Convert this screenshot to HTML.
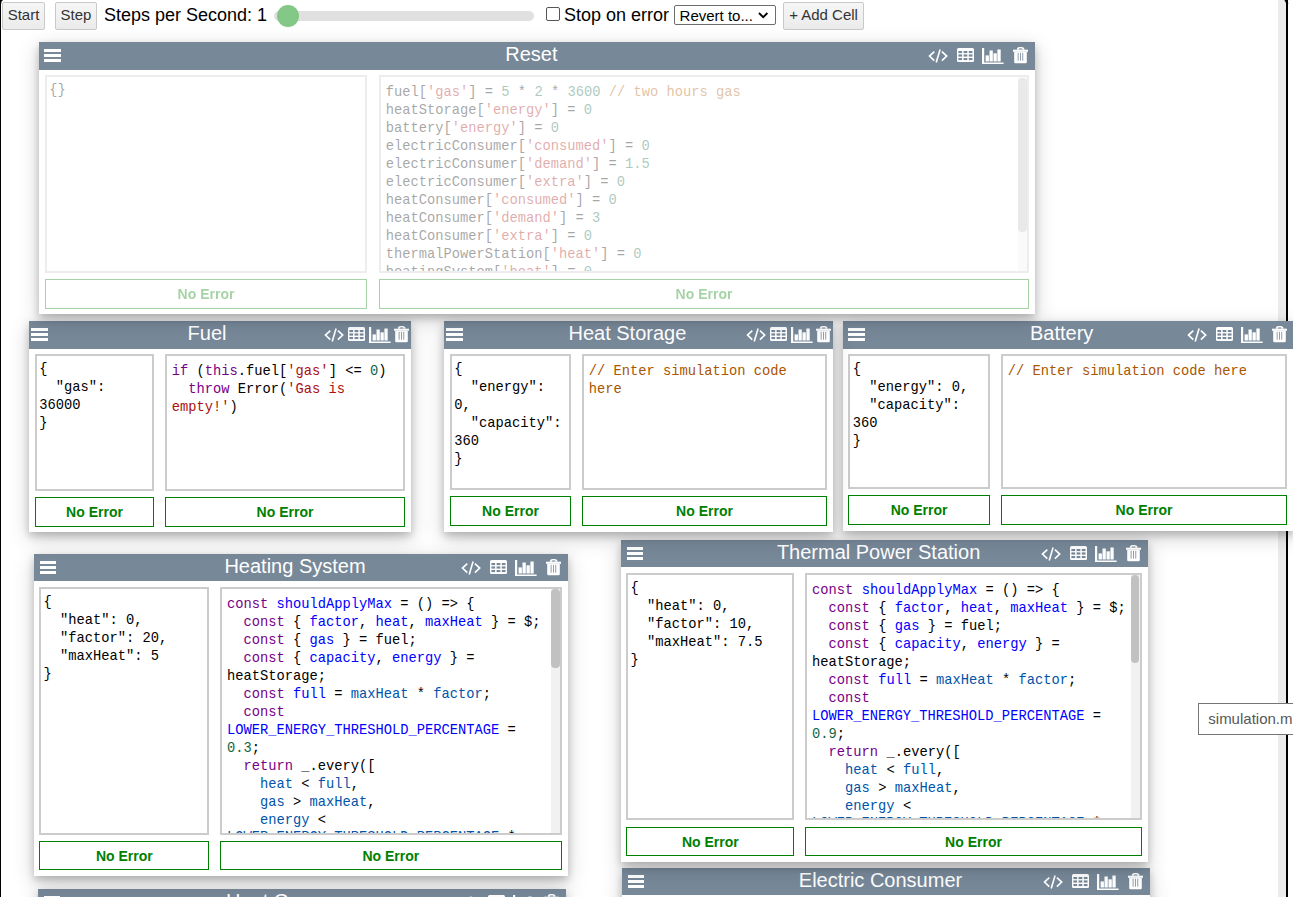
<!DOCTYPE html><html><head><meta charset="utf-8"><style>
html,body{margin:0;padding:0;background:#fff;width:1293px;height:897px;overflow:hidden;position:relative}
*{box-sizing:content-box}
.btn{position:absolute;box-sizing:border-box;border:1px solid #c9c9c9;border-radius:2px;background:linear-gradient(#f6f6f6,#ebebeb);color:#333;font:15px/25px "Liberation Sans",sans-serif;text-align:center}
</style></head><body>
<div style="position:absolute;left:1278px;top:0;width:8px;height:897px;background:#ececec"></div>
<div style="position:absolute;left:1286px;top:0;width:2.3px;height:897px;background:#000"></div>
<div style="position:absolute;left:0;top:0;width:1px;height:897px;background:#000"></div>
<svg style="position:absolute;left:0;top:0" width="4" height="4" viewBox="0 0 4 4"><path d="M0.5 4 Q0.5 0.4 2.6 0" fill="none" stroke="#000" stroke-width="1.2"/></svg>
<svg style="position:absolute;left:1282px;top:0" width="7" height="4" viewBox="0 0 7 4"><path d="M5.15 4 Q5.15 0.5 2.8 0" fill="none" stroke="#000" stroke-width="2.2"/></svg>
<div class="btn" style="left:2px;top:2px;width:43px;height:27.6px;line-height:24px">Start</div>
<div class="btn" style="left:55px;top:2px;width:42px;height:27.6px;line-height:24px">Step</div>
<div style="position:absolute;left:104px;top:3px;font:18px/24px 'Liberation Sans', sans-serif;color:#000;white-space:nowrap">Steps per Second: 1</div>
<div style="position:absolute;left:274px;top:11px;width:260px;height:10px;border-radius:5px;background:#e0e0e0"></div>
<div style="position:absolute;left:277px;top:5px;width:22px;height:22px;border-radius:50%;background:#82c785"></div>
<div style="position:absolute;left:546px;top:7px;width:13.6px;height:13.6px;box-sizing:border-box;border:1px solid #555;border-radius:2px;background:#fff"></div>
<div style="position:absolute;left:564px;top:3px;font:18px/24px 'Liberation Sans', sans-serif;color:#000;white-space:nowrap">Stop on error</div>
<div style="position:absolute;left:674.2px;top:5.3px;width:101.4px;height:20.2px;box-sizing:border-box;border:1px solid #6d6d6d;border-radius:2px;background:#fff;font:15px/19.6px 'Liberation Sans', sans-serif;color:#000;padding-left:4.4px;white-space:nowrap">Revert to...<svg style="position:absolute;left:83px;top:6.2px" width="11" height="7" viewBox="0 0 11 7"><path d="M1 1L5.2 5.2L9.4 1" fill="none" stroke="#000" stroke-width="1.8"/></svg></div>
<div class="btn" style="left:783.4px;top:2.2px;width:80.3px;height:27.6px;line-height:24.6px">+ Add Cell</div>
<div style="position:absolute;left:622px;top:868px;width:528px;height:332px;background:#fff;box-shadow:0 4px 8px 0 rgba(0,0,0,.2),0 6px 20px 0 rgba(0,0,0,.19)"><div style="position:absolute;left:0;top:0;width:528px;height:27px;background:#778899"><div style="position:absolute;left:5.5px;top:7px;width:16.7px;height:13px"><div style="position:absolute;left:0;top:0;width:100%;height:3px;background:#fff"></div><div style="position:absolute;left:0;top:5px;width:100%;height:3px;background:#fff"></div><div style="position:absolute;left:0;top:10px;width:100%;height:3px;background:#fff"></div></div><div style="position:absolute;left:58.5px;width:400px;top:0.9px;text-align:center;color:#fff;font:20px/23px 'Liberation Sans', sans-serif;white-space:nowrap">Electric Consumer</div><svg style="position:absolute;left:421.4000000000001px;top:7px" width="21" height="15" viewBox="0 0 21 15"><path d="M6.3 2.6L1.5 7.1L6.3 11.6M13.9 2.6L18.7 7.1L13.9 11.6" fill="none" stroke="#fff" stroke-width="1.65"/><path d="M12.1 0.5L8.2 13.5" fill="none" stroke="#fff" stroke-width="1.6"/></svg><svg style="position:absolute;left:449.9000000000001px;top:6px" width="17" height="15" viewBox="0 0 17 15"><rect x="0" y="0" width="17" height="14.1" rx="1.5" fill="#fff"/><rect x="1.4" y="3.0" width="3.7" height="2.1" fill="#778899"/><rect x="1.4" y="6.4" width="3.7" height="2.2" fill="#778899"/><rect x="1.4" y="10.0" width="3.7" height="2.1" fill="#778899"/><rect x="6.6" y="3.0" width="3.7" height="2.1" fill="#778899"/><rect x="6.6" y="6.4" width="3.7" height="2.2" fill="#778899"/><rect x="6.6" y="10.0" width="3.7" height="2.1" fill="#778899"/><rect x="11.8" y="3.0" width="3.7" height="2.1" fill="#778899"/><rect x="11.8" y="6.4" width="3.7" height="2.2" fill="#778899"/><rect x="11.8" y="10.0" width="3.7" height="2.1" fill="#778899"/></svg><svg style="position:absolute;left:475.0999999999999px;top:5.5px" width="22" height="17" viewBox="0 0 22 17"><rect x="0" y="0" width="2.2" height="16" fill="#fff"/><rect x="0" y="14.5" width="21.6" height="1.5" fill="#fff"/><rect x="3.6" y="7.4" width="3.3" height="6.1" fill="#fff"/><rect x="7.5" y="2.5" width="3.3" height="11" fill="#fff"/><rect x="11.5" y="5.3" width="3.3" height="8.2" fill="#fff"/><rect x="15.4" y="1.5" width="3.3" height="12" fill="#fff"/></svg><svg style="position:absolute;left:506px;top:5.2px" width="15" height="17" viewBox="0 0 15 17"><path d="M3.8 2.7 Q3.8 0.1 6.5 0.1 L8.5 0.1 Q11.5 0.1 11.5 2.7 Z" fill="#fff"/><rect x="5.9" y="1.5" width="3.4" height="1.3" fill="#778899"/><rect x="0" y="2.7" width="15" height="2.1" fill="#fff"/><path d="M1.2 4.8 H13.8 V15 Q13.8 16.3 12.5 16.3 H2.5 Q1.2 16.3 1.2 15 Z" fill="#fff"/><rect x="4.7" y="5.8" width="0.8" height="7.9" fill="#778899"/><rect x="7.0" y="5.8" width="0.8" height="7.9" fill="#778899"/><rect x="9.4" y="5.8" width="0.8" height="7.9" fill="#778899"/></svg></div><div style="position:absolute;left:0;top:0;width:100%;height:100%;"><div style="position:absolute;left:5px;top:33px;width:168px;height:249px;box-sizing:border-box;border:2px solid #ccc;overflow:hidden;background:#fff"><div style="position:absolute;left:2.3px;top:4.8px;font:13.75px/18px 'Liberation Mono', monospace;white-space:pre;color:#000"></div></div><div style="position:absolute;left:185px;top:33px;width:337px;height:249px;box-sizing:border-box;border:2px solid #ccc;overflow:hidden;background:#fff"><div style="position:absolute;left:4.8px;top:7px;font:13.75px/18px 'Liberation Mono', monospace;white-space:pre;color:#000"></div></div><div style="position:absolute;left:5px;top:287px;width:168px;height:30px;box-sizing:border-box;border:1.5px solid #008000;color:#008000;font:bold 14px/27px 'Liberation Sans', sans-serif;padding-top:0.8px;text-align:center">No Error</div><div style="position:absolute;left:185px;top:287px;width:337px;height:30px;box-sizing:border-box;border:1.5px solid #008000;color:#008000;font:bold 14px/27px 'Liberation Sans', sans-serif;padding-top:0.8px;text-align:center">No Error</div></div></div>
<div style="position:absolute;left:38px;top:889px;width:528px;height:311px;background:#fff;box-shadow:0 4px 8px 0 rgba(0,0,0,.2),0 6px 20px 0 rgba(0,0,0,.19)"><div style="position:absolute;left:0;top:0;width:528px;height:27px;background:#778899"><div style="position:absolute;left:5.5px;top:7px;width:16.7px;height:13px"><div style="position:absolute;left:0;top:0;width:100%;height:3px;background:#fff"></div><div style="position:absolute;left:0;top:5px;width:100%;height:3px;background:#fff"></div><div style="position:absolute;left:0;top:10px;width:100%;height:3px;background:#fff"></div></div><div style="position:absolute;left:58px;width:400px;top:0.9px;text-align:center;color:#fff;font:20px/23px 'Liberation Sans', sans-serif;white-space:nowrap">Heat Consumer</div><svg style="position:absolute;left:421.4px;top:7px" width="21" height="15" viewBox="0 0 21 15"><path d="M6.3 2.6L1.5 7.1L6.3 11.6M13.9 2.6L18.7 7.1L13.9 11.6" fill="none" stroke="#fff" stroke-width="1.65"/><path d="M12.1 0.5L8.2 13.5" fill="none" stroke="#fff" stroke-width="1.6"/></svg><svg style="position:absolute;left:449.9px;top:6px" width="17" height="15" viewBox="0 0 17 15"><rect x="0" y="0" width="17" height="14.1" rx="1.5" fill="#fff"/><rect x="1.4" y="3.0" width="3.7" height="2.1" fill="#778899"/><rect x="1.4" y="6.4" width="3.7" height="2.2" fill="#778899"/><rect x="1.4" y="10.0" width="3.7" height="2.1" fill="#778899"/><rect x="6.6" y="3.0" width="3.7" height="2.1" fill="#778899"/><rect x="6.6" y="6.4" width="3.7" height="2.2" fill="#778899"/><rect x="6.6" y="10.0" width="3.7" height="2.1" fill="#778899"/><rect x="11.8" y="3.0" width="3.7" height="2.1" fill="#778899"/><rect x="11.8" y="6.4" width="3.7" height="2.2" fill="#778899"/><rect x="11.8" y="10.0" width="3.7" height="2.1" fill="#778899"/></svg><svg style="position:absolute;left:475.1px;top:5.5px" width="22" height="17" viewBox="0 0 22 17"><rect x="0" y="0" width="2.2" height="16" fill="#fff"/><rect x="0" y="14.5" width="21.6" height="1.5" fill="#fff"/><rect x="3.6" y="7.4" width="3.3" height="6.1" fill="#fff"/><rect x="7.5" y="2.5" width="3.3" height="11" fill="#fff"/><rect x="11.5" y="5.3" width="3.3" height="8.2" fill="#fff"/><rect x="15.4" y="1.5" width="3.3" height="12" fill="#fff"/></svg><svg style="position:absolute;left:506px;top:5.2px" width="15" height="17" viewBox="0 0 15 17"><path d="M3.8 2.7 Q3.8 0.1 6.5 0.1 L8.5 0.1 Q11.5 0.1 11.5 2.7 Z" fill="#fff"/><rect x="5.9" y="1.5" width="3.4" height="1.3" fill="#778899"/><rect x="0" y="2.7" width="15" height="2.1" fill="#fff"/><path d="M1.2 4.8 H13.8 V15 Q13.8 16.3 12.5 16.3 H2.5 Q1.2 16.3 1.2 15 Z" fill="#fff"/><rect x="4.7" y="5.8" width="0.8" height="7.9" fill="#778899"/><rect x="7.0" y="5.8" width="0.8" height="7.9" fill="#778899"/><rect x="9.4" y="5.8" width="0.8" height="7.9" fill="#778899"/></svg></div><div style="position:absolute;left:0;top:0;width:100%;height:100%;"><div style="position:absolute;left:6px;top:33px;width:166px;height:228px;box-sizing:border-box;border:2px solid #ccc;overflow:hidden;background:#fff"><div style="position:absolute;left:2.3px;top:4.8px;font:13.75px/18px 'Liberation Mono', monospace;white-space:pre;color:#000"></div></div><div style="position:absolute;left:184px;top:33px;width:338px;height:228px;box-sizing:border-box;border:2px solid #ccc;overflow:hidden;background:#fff"><div style="position:absolute;left:4.8px;top:7px;font:13.75px/18px 'Liberation Mono', monospace;white-space:pre;color:#000"></div></div><div style="position:absolute;left:6px;top:266px;width:166px;height:30px;box-sizing:border-box;border:1.5px solid #008000;color:#008000;font:bold 14px/27px 'Liberation Sans', sans-serif;padding-top:0.8px;text-align:center">No Error</div><div style="position:absolute;left:184px;top:266px;width:338px;height:30px;box-sizing:border-box;border:1.5px solid #008000;color:#008000;font:bold 14px/27px 'Liberation Sans', sans-serif;padding-top:0.8px;text-align:center">No Error</div></div></div>
<div style="position:absolute;left:621px;top:540px;width:527px;height:322px;background:#fff;box-shadow:0 4px 8px 0 rgba(0,0,0,.2),0 6px 20px 0 rgba(0,0,0,.19)"><div style="position:absolute;left:0;top:0;width:527px;height:26.6px;background:#778899"><div style="position:absolute;left:5.5px;top:7px;width:16.7px;height:13px"><div style="position:absolute;left:0;top:0;width:100%;height:3px;background:#fff"></div><div style="position:absolute;left:0;top:5px;width:100%;height:3px;background:#fff"></div><div style="position:absolute;left:0;top:10px;width:100%;height:3px;background:#fff"></div></div><div style="position:absolute;left:57.60000000000002px;width:400px;top:0.7px;text-align:center;color:#fff;font:20px/23px 'Liberation Sans', sans-serif;white-space:nowrap">Thermal Power Station</div><svg style="position:absolute;left:420.4000000000001px;top:7px" width="21" height="15" viewBox="0 0 21 15"><path d="M6.3 2.6L1.5 7.1L6.3 11.6M13.9 2.6L18.7 7.1L13.9 11.6" fill="none" stroke="#fff" stroke-width="1.65"/><path d="M12.1 0.5L8.2 13.5" fill="none" stroke="#fff" stroke-width="1.6"/></svg><svg style="position:absolute;left:448.9000000000001px;top:6px" width="17" height="15" viewBox="0 0 17 15"><rect x="0" y="0" width="17" height="14.1" rx="1.5" fill="#fff"/><rect x="1.4" y="3.0" width="3.7" height="2.1" fill="#778899"/><rect x="1.4" y="6.4" width="3.7" height="2.2" fill="#778899"/><rect x="1.4" y="10.0" width="3.7" height="2.1" fill="#778899"/><rect x="6.6" y="3.0" width="3.7" height="2.1" fill="#778899"/><rect x="6.6" y="6.4" width="3.7" height="2.2" fill="#778899"/><rect x="6.6" y="10.0" width="3.7" height="2.1" fill="#778899"/><rect x="11.8" y="3.0" width="3.7" height="2.1" fill="#778899"/><rect x="11.8" y="6.4" width="3.7" height="2.2" fill="#778899"/><rect x="11.8" y="10.0" width="3.7" height="2.1" fill="#778899"/></svg><svg style="position:absolute;left:474.0999999999999px;top:5.5px" width="22" height="17" viewBox="0 0 22 17"><rect x="0" y="0" width="2.2" height="16" fill="#fff"/><rect x="0" y="14.5" width="21.6" height="1.5" fill="#fff"/><rect x="3.6" y="7.4" width="3.3" height="6.1" fill="#fff"/><rect x="7.5" y="2.5" width="3.3" height="11" fill="#fff"/><rect x="11.5" y="5.3" width="3.3" height="8.2" fill="#fff"/><rect x="15.4" y="1.5" width="3.3" height="12" fill="#fff"/></svg><svg style="position:absolute;left:505px;top:5.2px" width="15" height="17" viewBox="0 0 15 17"><path d="M3.8 2.7 Q3.8 0.1 6.5 0.1 L8.5 0.1 Q11.5 0.1 11.5 2.7 Z" fill="#fff"/><rect x="5.9" y="1.5" width="3.4" height="1.3" fill="#778899"/><rect x="0" y="2.7" width="15" height="2.1" fill="#fff"/><path d="M1.2 4.8 H13.8 V15 Q13.8 16.3 12.5 16.3 H2.5 Q1.2 16.3 1.2 15 Z" fill="#fff"/><rect x="4.7" y="5.8" width="0.8" height="7.9" fill="#778899"/><rect x="7.0" y="5.8" width="0.8" height="7.9" fill="#778899"/><rect x="9.4" y="5.8" width="0.8" height="7.9" fill="#778899"/></svg></div><div style="position:absolute;left:0;top:0;width:100%;height:100%;"><div style="position:absolute;left:5.2000000000000455px;top:33.200000000000045px;width:168.19999999999993px;height:247.29999999999995px;box-sizing:border-box;border:2px solid #ccc;overflow:hidden;background:#fff"><div style="position:absolute;left:2.3px;top:4.8px;font:13.75px/18px 'Liberation Mono', monospace;white-space:pre;color:#000">{
  "heat": 0,
  "factor": 10,
  "maxHeat": 7.5
}</div></div><div style="position:absolute;left:184.29999999999995px;top:33.39999999999998px;width:336.4000000000001px;height:247.10000000000002px;box-sizing:border-box;border:2px solid #ccc;overflow:hidden;background:#fff"><div style="position:absolute;left:4.8px;top:7px;font:13.75px/18px 'Liberation Mono', monospace;white-space:pre;color:#000"><span style="color:#708">const</span> <span style="color:#00f">shouldApplyMax</span> = () =&gt; {
  <span style="color:#708">const</span> { <span style="color:#00f">factor</span>, <span style="color:#00f">heat</span>, <span style="color:#00f">maxHeat</span> } = $;
  <span style="color:#708">const</span> { <span style="color:#00f">gas</span> } = fuel;
  <span style="color:#708">const</span> { <span style="color:#00f">capacity</span>, <span style="color:#00f">energy</span> } =
heatStorage;
  <span style="color:#708">const</span> <span style="color:#00f">full</span> = <span style="color:#05a">maxHeat</span> * <span style="color:#05a">factor</span>;
  <span style="color:#708">const</span>
<span style="color:#00f">LOWER_ENERGY_THRESHOLD_PERCENTAGE</span> =
<span style="color:#164">0.9</span>;
  <span style="color:#708">return</span> _.every([
    <span style="color:#05a">heat</span> &lt; <span style="color:#05a">full</span>,
    <span style="color:#05a">gas</span> &gt; <span style="color:#05a">maxHeat</span>,
    <span style="color:#05a">energy</span> &lt;
<span style="position:relative;top:-1.5px"><span style="color:#05a">LOWER_ENERGY_THRESHOLD_PERCENTAGE</span> *</span>
</div><div style="position:absolute;left:323.4000000000001px;top:0;width:11px;height:100%;background:#f1f1f1"></div><div style="position:absolute;left:323.70000000000005px;top:-0.39999999999997726px;width:8.5px;height:88px;background:#c1c1c1;border-radius:4px"></div></div><div style="position:absolute;left:5.2000000000000455px;top:287px;width:168.19999999999993px;height:29px;box-sizing:border-box;border:1.5px solid #008000;color:#008000;font:bold 14px/26px 'Liberation Sans', sans-serif;padding-top:0.8px;text-align:center">No Error</div><div style="position:absolute;left:184.29999999999995px;top:287px;width:336.4000000000001px;height:29px;box-sizing:border-box;border:1.5px solid #008000;color:#008000;font:bold 14px/26px 'Liberation Sans', sans-serif;padding-top:0.8px;text-align:center">No Error</div></div></div>
<div style="position:absolute;left:34px;top:554px;width:534px;height:322px;background:#fff;box-shadow:0 4px 8px 0 rgba(0,0,0,.2),0 6px 20px 0 rgba(0,0,0,.19)"><div style="position:absolute;left:0;top:0;width:534px;height:26.8px;background:#778899"><div style="position:absolute;left:5.5px;top:7px;width:16.7px;height:13px"><div style="position:absolute;left:0;top:0;width:100%;height:3px;background:#fff"></div><div style="position:absolute;left:0;top:5px;width:100%;height:3px;background:#fff"></div><div style="position:absolute;left:0;top:10px;width:100%;height:3px;background:#fff"></div></div><div style="position:absolute;left:61px;width:400px;top:0.8px;text-align:center;color:#fff;font:20px/23px 'Liberation Sans', sans-serif;white-space:nowrap">Heating System</div><svg style="position:absolute;left:427.4px;top:7px" width="21" height="15" viewBox="0 0 21 15"><path d="M6.3 2.6L1.5 7.1L6.3 11.6M13.9 2.6L18.7 7.1L13.9 11.6" fill="none" stroke="#fff" stroke-width="1.65"/><path d="M12.1 0.5L8.2 13.5" fill="none" stroke="#fff" stroke-width="1.6"/></svg><svg style="position:absolute;left:455.9px;top:6px" width="17" height="15" viewBox="0 0 17 15"><rect x="0" y="0" width="17" height="14.1" rx="1.5" fill="#fff"/><rect x="1.4" y="3.0" width="3.7" height="2.1" fill="#778899"/><rect x="1.4" y="6.4" width="3.7" height="2.2" fill="#778899"/><rect x="1.4" y="10.0" width="3.7" height="2.1" fill="#778899"/><rect x="6.6" y="3.0" width="3.7" height="2.1" fill="#778899"/><rect x="6.6" y="6.4" width="3.7" height="2.2" fill="#778899"/><rect x="6.6" y="10.0" width="3.7" height="2.1" fill="#778899"/><rect x="11.8" y="3.0" width="3.7" height="2.1" fill="#778899"/><rect x="11.8" y="6.4" width="3.7" height="2.2" fill="#778899"/><rect x="11.8" y="10.0" width="3.7" height="2.1" fill="#778899"/></svg><svg style="position:absolute;left:481.1px;top:5.5px" width="22" height="17" viewBox="0 0 22 17"><rect x="0" y="0" width="2.2" height="16" fill="#fff"/><rect x="0" y="14.5" width="21.6" height="1.5" fill="#fff"/><rect x="3.6" y="7.4" width="3.3" height="6.1" fill="#fff"/><rect x="7.5" y="2.5" width="3.3" height="11" fill="#fff"/><rect x="11.5" y="5.3" width="3.3" height="8.2" fill="#fff"/><rect x="15.4" y="1.5" width="3.3" height="12" fill="#fff"/></svg><svg style="position:absolute;left:512px;top:5.2px" width="15" height="17" viewBox="0 0 15 17"><path d="M3.8 2.7 Q3.8 0.1 6.5 0.1 L8.5 0.1 Q11.5 0.1 11.5 2.7 Z" fill="#fff"/><rect x="5.9" y="1.5" width="3.4" height="1.3" fill="#778899"/><rect x="0" y="2.7" width="15" height="2.1" fill="#fff"/><path d="M1.2 4.8 H13.8 V15 Q13.8 16.3 12.5 16.3 H2.5 Q1.2 16.3 1.2 15 Z" fill="#fff"/><rect x="4.7" y="5.8" width="0.8" height="7.9" fill="#778899"/><rect x="7.0" y="5.8" width="0.8" height="7.9" fill="#778899"/><rect x="9.4" y="5.8" width="0.8" height="7.9" fill="#778899"/></svg></div><div style="position:absolute;left:0;top:0;width:100%;height:100%;"><div style="position:absolute;left:5.299999999999997px;top:33px;width:170.10000000000002px;height:247.5px;box-sizing:border-box;border:2px solid #ccc;overflow:hidden;background:#fff"><div style="position:absolute;left:2.3px;top:4.8px;font:13.75px/18px 'Liberation Mono', monospace;white-space:pre;color:#000">{
  "heat": 0,
  "factor": 20,
  "maxHeat": 5
}</div></div><div style="position:absolute;left:186.2px;top:33px;width:341.40000000000003px;height:247.5px;box-sizing:border-box;border:2px solid #ccc;overflow:hidden;background:#fff"><div style="position:absolute;left:4.8px;top:7px;font:13.75px/18px 'Liberation Mono', monospace;white-space:pre;color:#000"><span style="color:#708">const</span> <span style="color:#00f">shouldApplyMax</span> = () =&gt; {
  <span style="color:#708">const</span> { <span style="color:#00f">factor</span>, <span style="color:#00f">heat</span>, <span style="color:#00f">maxHeat</span> } = $;
  <span style="color:#708">const</span> { <span style="color:#00f">gas</span> } = fuel;
  <span style="color:#708">const</span> { <span style="color:#00f">capacity</span>, <span style="color:#00f">energy</span> } =
heatStorage;
  <span style="color:#708">const</span> <span style="color:#00f">full</span> = <span style="color:#05a">maxHeat</span> * <span style="color:#05a">factor</span>;
  <span style="color:#708">const</span>
<span style="color:#00f">LOWER_ENERGY_THRESHOLD_PERCENTAGE</span> =
<span style="color:#164">0.3</span>;
  <span style="color:#708">return</span> _.every([
    <span style="color:#05a">heat</span> &lt; <span style="color:#05a">full</span>,
    <span style="color:#05a">gas</span> &gt; <span style="color:#05a">maxHeat</span>,
    <span style="color:#05a">energy</span> &lt;
<span style="position:relative;top:-1.5px"><span style="color:#05a">LOWER_ENERGY_THRESHOLD_PERCENTAGE</span> *</span>
</div><div style="position:absolute;left:328.40000000000003px;top:0;width:11px;height:100%;background:#f1f1f1"></div><div style="position:absolute;left:329.2px;top:0px;width:8.300000000000068px;height:78.70000000000005px;background:#c1c1c1;border-radius:4px"></div></div><div style="position:absolute;left:5.299999999999997px;top:287px;width:170.10000000000002px;height:29px;box-sizing:border-box;border:1.5px solid #008000;color:#008000;font:bold 14px/26px 'Liberation Sans', sans-serif;padding-top:0.8px;text-align:center">No Error</div><div style="position:absolute;left:186.2px;top:287px;width:341.40000000000003px;height:29px;box-sizing:border-box;border:1.5px solid #008000;color:#008000;font:bold 14px/26px 'Liberation Sans', sans-serif;padding-top:0.8px;text-align:center">No Error</div></div></div>
<div style="position:absolute;left:843px;top:321px;width:450.5999999999999px;height:210px;background:#fff;box-shadow:0 4px 8px 0 rgba(0,0,0,.2),0 6px 20px 0 rgba(0,0,0,.19)"><div style="position:absolute;left:0;top:0;width:450.5999999999999px;height:27.6px;background:#778899"><div style="position:absolute;left:5.4px;top:7px;width:16.7px;height:13px"><div style="position:absolute;left:0;top:0;width:100%;height:3px;background:#fff"></div><div style="position:absolute;left:0;top:5px;width:100%;height:3px;background:#fff"></div><div style="position:absolute;left:0;top:10px;width:100%;height:3px;background:#fff"></div></div><div style="position:absolute;left:18.700000000000045px;width:400px;top:1.2px;text-align:center;color:#fff;font:20px/23px 'Liberation Sans', sans-serif;white-space:nowrap">Battery</div><svg style="position:absolute;left:344.0px;top:7px" width="21" height="15" viewBox="0 0 21 15"><path d="M6.3 2.6L1.5 7.1L6.3 11.6M13.9 2.6L18.7 7.1L13.9 11.6" fill="none" stroke="#fff" stroke-width="1.65"/><path d="M12.1 0.5L8.2 13.5" fill="none" stroke="#fff" stroke-width="1.6"/></svg><svg style="position:absolute;left:372.5px;top:6px" width="17" height="15" viewBox="0 0 17 15"><rect x="0" y="0" width="17" height="14.1" rx="1.5" fill="#fff"/><rect x="1.4" y="3.0" width="3.7" height="2.1" fill="#778899"/><rect x="1.4" y="6.4" width="3.7" height="2.2" fill="#778899"/><rect x="1.4" y="10.0" width="3.7" height="2.1" fill="#778899"/><rect x="6.6" y="3.0" width="3.7" height="2.1" fill="#778899"/><rect x="6.6" y="6.4" width="3.7" height="2.2" fill="#778899"/><rect x="6.6" y="10.0" width="3.7" height="2.1" fill="#778899"/><rect x="11.8" y="3.0" width="3.7" height="2.1" fill="#778899"/><rect x="11.8" y="6.4" width="3.7" height="2.2" fill="#778899"/><rect x="11.8" y="10.0" width="3.7" height="2.1" fill="#778899"/></svg><svg style="position:absolute;left:397.6999999999998px;top:5.5px" width="22" height="17" viewBox="0 0 22 17"><rect x="0" y="0" width="2.2" height="16" fill="#fff"/><rect x="0" y="14.5" width="21.6" height="1.5" fill="#fff"/><rect x="3.6" y="7.4" width="3.3" height="6.1" fill="#fff"/><rect x="7.5" y="2.5" width="3.3" height="11" fill="#fff"/><rect x="11.5" y="5.3" width="3.3" height="8.2" fill="#fff"/><rect x="15.4" y="1.5" width="3.3" height="12" fill="#fff"/></svg><svg style="position:absolute;left:428.5999999999999px;top:5.2px" width="15" height="17" viewBox="0 0 15 17"><path d="M3.8 2.7 Q3.8 0.1 6.5 0.1 L8.5 0.1 Q11.5 0.1 11.5 2.7 Z" fill="#fff"/><rect x="5.9" y="1.5" width="3.4" height="1.3" fill="#778899"/><rect x="0" y="2.7" width="15" height="2.1" fill="#fff"/><path d="M1.2 4.8 H13.8 V15 Q13.8 16.3 12.5 16.3 H2.5 Q1.2 16.3 1.2 15 Z" fill="#fff"/><rect x="4.7" y="5.8" width="0.8" height="7.9" fill="#778899"/><rect x="7.0" y="5.8" width="0.8" height="7.9" fill="#778899"/><rect x="9.4" y="5.8" width="0.8" height="7.9" fill="#778899"/></svg></div><div style="position:absolute;left:0;top:0;width:100%;height:100%;"><div style="position:absolute;left:5.399999999999977px;top:33px;width:141.30000000000007px;height:135px;box-sizing:border-box;border:2px solid #ccc;overflow:hidden;background:#fff"><div style="position:absolute;left:2.3px;top:4.8px;font:13.75px/18px 'Liberation Mono', monospace;white-space:pre;color:#000">{
  "energy": 0,
  "capacity":
360
}</div></div><div style="position:absolute;left:158px;top:33px;width:286px;height:135px;box-sizing:border-box;border:2px solid #ccc;overflow:hidden;background:#fff"><div style="position:absolute;left:4.8px;top:7px;font:13.75px/18px 'Liberation Mono', monospace;white-space:pre;color:#000"><span style="color:#a50">// Enter simulation code here</span></div></div><div style="position:absolute;left:5.399999999999977px;top:174px;width:141.30000000000007px;height:30px;box-sizing:border-box;border:1.5px solid #008000;color:#008000;font:bold 14px/27px 'Liberation Sans', sans-serif;padding-top:0.8px;text-align:center">No Error</div><div style="position:absolute;left:158px;top:174px;width:286px;height:30px;box-sizing:border-box;border:1.5px solid #008000;color:#008000;font:bold 14px/27px 'Liberation Sans', sans-serif;padding-top:0.8px;text-align:center">No Error</div></div></div>
<div style="position:absolute;left:444px;top:321px;width:389px;height:211px;background:#fff;box-shadow:0 4px 8px 0 rgba(0,0,0,.2),0 6px 20px 0 rgba(0,0,0,.19)"><div style="position:absolute;left:0;top:0;width:389px;height:27.6px;background:#778899"><div style="position:absolute;left:2px;top:7px;width:16.7px;height:13px"><div style="position:absolute;left:0;top:0;width:100%;height:3px;background:#fff"></div><div style="position:absolute;left:0;top:5px;width:100%;height:3px;background:#fff"></div><div style="position:absolute;left:0;top:10px;width:100%;height:3px;background:#fff"></div></div><div style="position:absolute;left:-16.600000000000023px;width:400px;top:1.2px;text-align:center;color:#fff;font:20px/23px 'Liberation Sans', sans-serif;white-space:nowrap">Heat Storage</div><svg style="position:absolute;left:302px;top:7px" width="21" height="15" viewBox="0 0 21 15"><path d="M6.3 2.6L1.5 7.1L6.3 11.6M13.9 2.6L18.7 7.1L13.9 11.6" fill="none" stroke="#fff" stroke-width="1.65"/><path d="M12.1 0.5L8.2 13.5" fill="none" stroke="#fff" stroke-width="1.6"/></svg><svg style="position:absolute;left:325.5px;top:6px" width="17" height="15" viewBox="0 0 17 15"><rect x="0" y="0" width="17" height="14.1" rx="1.5" fill="#fff"/><rect x="1.4" y="3.0" width="3.7" height="2.1" fill="#778899"/><rect x="1.4" y="6.4" width="3.7" height="2.2" fill="#778899"/><rect x="1.4" y="10.0" width="3.7" height="2.1" fill="#778899"/><rect x="6.6" y="3.0" width="3.7" height="2.1" fill="#778899"/><rect x="6.6" y="6.4" width="3.7" height="2.2" fill="#778899"/><rect x="6.6" y="10.0" width="3.7" height="2.1" fill="#778899"/><rect x="11.8" y="3.0" width="3.7" height="2.1" fill="#778899"/><rect x="11.8" y="6.4" width="3.7" height="2.2" fill="#778899"/><rect x="11.8" y="10.0" width="3.7" height="2.1" fill="#778899"/></svg><svg style="position:absolute;left:347px;top:5.5px" width="22" height="17" viewBox="0 0 22 17"><rect x="0" y="0" width="2.2" height="16" fill="#fff"/><rect x="0" y="14.5" width="21.6" height="1.5" fill="#fff"/><rect x="3.6" y="7.4" width="3.3" height="6.1" fill="#fff"/><rect x="7.5" y="2.5" width="3.3" height="11" fill="#fff"/><rect x="11.5" y="5.3" width="3.3" height="8.2" fill="#fff"/><rect x="15.4" y="1.5" width="3.3" height="12" fill="#fff"/></svg><svg style="position:absolute;left:371.70000000000005px;top:5.2px" width="15" height="17" viewBox="0 0 15 17"><path d="M3.8 2.7 Q3.8 0.1 6.5 0.1 L8.5 0.1 Q11.5 0.1 11.5 2.7 Z" fill="#fff"/><rect x="5.9" y="1.5" width="3.4" height="1.3" fill="#778899"/><rect x="0" y="2.7" width="15" height="2.1" fill="#fff"/><path d="M1.2 4.8 H13.8 V15 Q13.8 16.3 12.5 16.3 H2.5 Q1.2 16.3 1.2 15 Z" fill="#fff"/><rect x="4.7" y="5.8" width="0.8" height="7.9" fill="#778899"/><rect x="7.0" y="5.8" width="0.8" height="7.9" fill="#778899"/><rect x="9.4" y="5.8" width="0.8" height="7.9" fill="#778899"/></svg></div><div style="position:absolute;left:0;top:0;width:100%;height:100%;"><div style="position:absolute;left:6px;top:33px;width:121px;height:136px;box-sizing:border-box;border:2px solid #ccc;overflow:hidden;background:#fff"><div style="position:absolute;left:2.3px;top:4.8px;font:13.75px/18px 'Liberation Mono', monospace;white-space:pre;color:#000">{
  "energy":
0,
  "capacity":
360
}</div></div><div style="position:absolute;left:138px;top:33px;width:245px;height:136px;box-sizing:border-box;border:2px solid #ccc;overflow:hidden;background:#fff"><div style="position:absolute;left:4.8px;top:7px;font:13.75px/18px 'Liberation Mono', monospace;white-space:pre;color:#000"><span style="color:#a50">// Enter simulation code</span>
<span style="color:#a50">here</span></div></div><div style="position:absolute;left:6px;top:175px;width:121px;height:30px;box-sizing:border-box;border:1.5px solid #008000;color:#008000;font:bold 14px/27px 'Liberation Sans', sans-serif;padding-top:0.8px;text-align:center">No Error</div><div style="position:absolute;left:138px;top:175px;width:245px;height:30px;box-sizing:border-box;border:1.5px solid #008000;color:#008000;font:bold 14px/27px 'Liberation Sans', sans-serif;padding-top:0.8px;text-align:center">No Error</div></div></div>
<div style="position:absolute;left:29px;top:321px;width:382px;height:211px;background:#fff;box-shadow:0 4px 8px 0 rgba(0,0,0,.2),0 6px 20px 0 rgba(0,0,0,.19)"><div style="position:absolute;left:0;top:0;width:382px;height:27.5px;background:#778899"><div style="position:absolute;left:2px;top:7px;width:16.7px;height:13px"><div style="position:absolute;left:0;top:0;width:100%;height:3px;background:#fff"></div><div style="position:absolute;left:0;top:5px;width:100%;height:3px;background:#fff"></div><div style="position:absolute;left:0;top:10px;width:100%;height:3px;background:#fff"></div></div><div style="position:absolute;left:-22px;width:400px;top:1.1px;text-align:center;color:#fff;font:20px/23px 'Liberation Sans', sans-serif;white-space:nowrap">Fuel</div><svg style="position:absolute;left:295px;top:7px" width="21" height="15" viewBox="0 0 21 15"><path d="M6.3 2.6L1.5 7.1L6.3 11.6M13.9 2.6L18.7 7.1L13.9 11.6" fill="none" stroke="#fff" stroke-width="1.65"/><path d="M12.1 0.5L8.2 13.5" fill="none" stroke="#fff" stroke-width="1.6"/></svg><svg style="position:absolute;left:318.5px;top:6px" width="17" height="15" viewBox="0 0 17 15"><rect x="0" y="0" width="17" height="14.1" rx="1.5" fill="#fff"/><rect x="1.4" y="3.0" width="3.7" height="2.1" fill="#778899"/><rect x="1.4" y="6.4" width="3.7" height="2.2" fill="#778899"/><rect x="1.4" y="10.0" width="3.7" height="2.1" fill="#778899"/><rect x="6.6" y="3.0" width="3.7" height="2.1" fill="#778899"/><rect x="6.6" y="6.4" width="3.7" height="2.2" fill="#778899"/><rect x="6.6" y="10.0" width="3.7" height="2.1" fill="#778899"/><rect x="11.8" y="3.0" width="3.7" height="2.1" fill="#778899"/><rect x="11.8" y="6.4" width="3.7" height="2.2" fill="#778899"/><rect x="11.8" y="10.0" width="3.7" height="2.1" fill="#778899"/></svg><svg style="position:absolute;left:340px;top:5.5px" width="22" height="17" viewBox="0 0 22 17"><rect x="0" y="0" width="2.2" height="16" fill="#fff"/><rect x="0" y="14.5" width="21.6" height="1.5" fill="#fff"/><rect x="3.6" y="7.4" width="3.3" height="6.1" fill="#fff"/><rect x="7.5" y="2.5" width="3.3" height="11" fill="#fff"/><rect x="11.5" y="5.3" width="3.3" height="8.2" fill="#fff"/><rect x="15.4" y="1.5" width="3.3" height="12" fill="#fff"/></svg><svg style="position:absolute;left:364.7px;top:5.2px" width="15" height="17" viewBox="0 0 15 17"><path d="M3.8 2.7 Q3.8 0.1 6.5 0.1 L8.5 0.1 Q11.5 0.1 11.5 2.7 Z" fill="#fff"/><rect x="5.9" y="1.5" width="3.4" height="1.3" fill="#778899"/><rect x="0" y="2.7" width="15" height="2.1" fill="#fff"/><path d="M1.2 4.8 H13.8 V15 Q13.8 16.3 12.5 16.3 H2.5 Q1.2 16.3 1.2 15 Z" fill="#fff"/><rect x="4.7" y="5.8" width="0.8" height="7.9" fill="#778899"/><rect x="7.0" y="5.8" width="0.8" height="7.9" fill="#778899"/><rect x="9.4" y="5.8" width="0.8" height="7.9" fill="#778899"/></svg></div><div style="position:absolute;left:0;top:0;width:100%;height:100%;"><div style="position:absolute;left:6px;top:33px;width:119px;height:137px;box-sizing:border-box;border:2px solid #ccc;overflow:hidden;background:#fff"><div style="position:absolute;left:2.3px;top:4.8px;font:13.75px/18px 'Liberation Mono', monospace;white-space:pre;color:#000">{
  "gas":
36000
}</div></div><div style="position:absolute;left:136px;top:33px;width:240px;height:137px;box-sizing:border-box;border:2px solid #ccc;overflow:hidden;background:#fff"><div style="position:absolute;left:4.8px;top:7px;font:13.75px/18px 'Liberation Mono', monospace;white-space:pre;color:#000"><span style="color:#708">if</span> (<span style="color:#708">this</span>.fuel[<span style="color:#a11">'gas'</span>] &lt;= <span style="color:#164">0</span>)
  <span style="color:#708">throw</span> Error(<span style="color:#a11">'Gas is</span>
<span style="color:#a11">empty!'</span>)</div></div><div style="position:absolute;left:6px;top:176px;width:119px;height:30px;box-sizing:border-box;border:1.5px solid #008000;color:#008000;font:bold 14px/27px 'Liberation Sans', sans-serif;padding-top:0.8px;text-align:center">No Error</div><div style="position:absolute;left:136px;top:176px;width:240px;height:30px;box-sizing:border-box;border:1.5px solid #008000;color:#008000;font:bold 14px/27px 'Liberation Sans', sans-serif;padding-top:0.8px;text-align:center">No Error</div></div></div>
<div style="position:absolute;left:39px;top:42px;width:996px;height:272px;background:#fff;box-shadow:0 4px 8px 0 rgba(0,0,0,.2),0 6px 20px 0 rgba(0,0,0,.19)"><div style="position:absolute;left:0;top:0;width:996px;height:28px;background:#778899"><div style="position:absolute;left:5.4px;top:7px;width:16.7px;height:13px"><div style="position:absolute;left:0;top:0;width:100%;height:3px;background:#fff"></div><div style="position:absolute;left:0;top:5px;width:100%;height:3px;background:#fff"></div><div style="position:absolute;left:0;top:10px;width:100%;height:3px;background:#fff"></div></div><div style="position:absolute;left:292.4px;width:400px;top:1.4px;text-align:center;color:#fff;font:20px/23px 'Liberation Sans', sans-serif;white-space:nowrap">Reset</div><svg style="position:absolute;left:889.4px;top:7px" width="21" height="15" viewBox="0 0 21 15"><path d="M6.3 2.6L1.5 7.1L6.3 11.6M13.9 2.6L18.7 7.1L13.9 11.6" fill="none" stroke="#fff" stroke-width="1.65"/><path d="M12.1 0.5L8.2 13.5" fill="none" stroke="#fff" stroke-width="1.6"/></svg><svg style="position:absolute;left:917.9px;top:6px" width="17" height="15" viewBox="0 0 17 15"><rect x="0" y="0" width="17" height="14.1" rx="1.5" fill="#fff"/><rect x="1.4" y="3.0" width="3.7" height="2.1" fill="#778899"/><rect x="1.4" y="6.4" width="3.7" height="2.2" fill="#778899"/><rect x="1.4" y="10.0" width="3.7" height="2.1" fill="#778899"/><rect x="6.6" y="3.0" width="3.7" height="2.1" fill="#778899"/><rect x="6.6" y="6.4" width="3.7" height="2.2" fill="#778899"/><rect x="6.6" y="10.0" width="3.7" height="2.1" fill="#778899"/><rect x="11.8" y="3.0" width="3.7" height="2.1" fill="#778899"/><rect x="11.8" y="6.4" width="3.7" height="2.2" fill="#778899"/><rect x="11.8" y="10.0" width="3.7" height="2.1" fill="#778899"/></svg><svg style="position:absolute;left:943.1px;top:5.5px" width="22" height="17" viewBox="0 0 22 17"><rect x="0" y="0" width="2.2" height="16" fill="#fff"/><rect x="0" y="14.5" width="21.6" height="1.5" fill="#fff"/><rect x="3.6" y="7.4" width="3.3" height="6.1" fill="#fff"/><rect x="7.5" y="2.5" width="3.3" height="11" fill="#fff"/><rect x="11.5" y="5.3" width="3.3" height="8.2" fill="#fff"/><rect x="15.4" y="1.5" width="3.3" height="12" fill="#fff"/></svg><svg style="position:absolute;left:974px;top:5.2px" width="15" height="17" viewBox="0 0 15 17"><path d="M3.8 2.7 Q3.8 0.1 6.5 0.1 L8.5 0.1 Q11.5 0.1 11.5 2.7 Z" fill="#fff"/><rect x="5.9" y="1.5" width="3.4" height="1.3" fill="#778899"/><rect x="0" y="2.7" width="15" height="2.1" fill="#fff"/><path d="M1.2 4.8 H13.8 V15 Q13.8 16.3 12.5 16.3 H2.5 Q1.2 16.3 1.2 15 Z" fill="#fff"/><rect x="4.7" y="5.8" width="0.8" height="7.9" fill="#778899"/><rect x="7.0" y="5.8" width="0.8" height="7.9" fill="#778899"/><rect x="9.4" y="5.8" width="0.8" height="7.9" fill="#778899"/></svg></div><div style="position:absolute;left:0;top:0;width:100%;height:100%;opacity:.35;"><div style="position:absolute;left:6px;top:33px;width:322px;height:198.39999999999998px;box-sizing:border-box;border:2px solid #ccc;overflow:hidden;background:#fff"><div style="position:absolute;left:2.3px;top:4.8px;font:13.75px/18px 'Liberation Mono', monospace;white-space:pre;color:#000">{}</div></div><div style="position:absolute;left:340px;top:33px;width:650px;height:198.39999999999998px;box-sizing:border-box;border:2px solid #ccc;overflow:hidden;background:#fff"><div style="position:absolute;left:4.8px;top:7px;font:13.75px/18px 'Liberation Mono', monospace;white-space:pre;color:#000">fuel[<span style="color:#a11">'gas'</span>] = <span style="color:#164">5</span> * <span style="color:#164">2</span> * <span style="color:#164">3600</span> <span style="color:#a50">// two hours gas</span>
heatStorage[<span style="color:#a11">'energy'</span>] = <span style="color:#164">0</span>
battery[<span style="color:#a11">'energy'</span>] = <span style="color:#164">0</span>
electricConsumer[<span style="color:#a11">'consumed'</span>] = <span style="color:#164">0</span>
electricConsumer[<span style="color:#a11">'demand'</span>] = <span style="color:#164">1.5</span>
electricConsumer[<span style="color:#a11">'extra'</span>] = <span style="color:#164">0</span>
heatConsumer[<span style="color:#a11">'consumed'</span>] = <span style="color:#164">0</span>
heatConsumer[<span style="color:#a11">'demand'</span>] = <span style="color:#164">3</span>
heatConsumer[<span style="color:#a11">'extra'</span>] = <span style="color:#164">0</span>
thermalPowerStation[<span style="color:#a11">'heat'</span>] = <span style="color:#164">0</span>
heatingSystem[<span style="color:#a11">'heat'</span>] = <span style="color:#164">0</span>
</div><div style="position:absolute;left:637px;top:0;width:11px;height:100%;background:#f1f1f1"></div><div style="position:absolute;left:637px;top:1px;width:9px;height:154px;background:#c1c1c1;border-radius:4px"></div></div><div style="position:absolute;left:6px;top:237px;width:322px;height:30px;box-sizing:border-box;border:1.5px solid #008000;color:#008000;font:bold 14px/27px 'Liberation Sans', sans-serif;padding-top:0.8px;text-align:center">No Error</div><div style="position:absolute;left:340px;top:237px;width:650px;height:30px;box-sizing:border-box;border:1.5px solid #008000;color:#008000;font:bold 14px/27px 'Liberation Sans', sans-serif;padding-top:0.8px;text-align:center">No Error</div></div></div>
<div style="position:absolute;left:1198.3px;top:703.3px;width:120px;height:31.5px;box-sizing:border-box;border:1px solid #767676;background:#fff;font:15px/29px 'Liberation Sans', sans-serif;color:#575757;padding-left:9px;white-space:nowrap">simulation.m</div>
</body></html>
